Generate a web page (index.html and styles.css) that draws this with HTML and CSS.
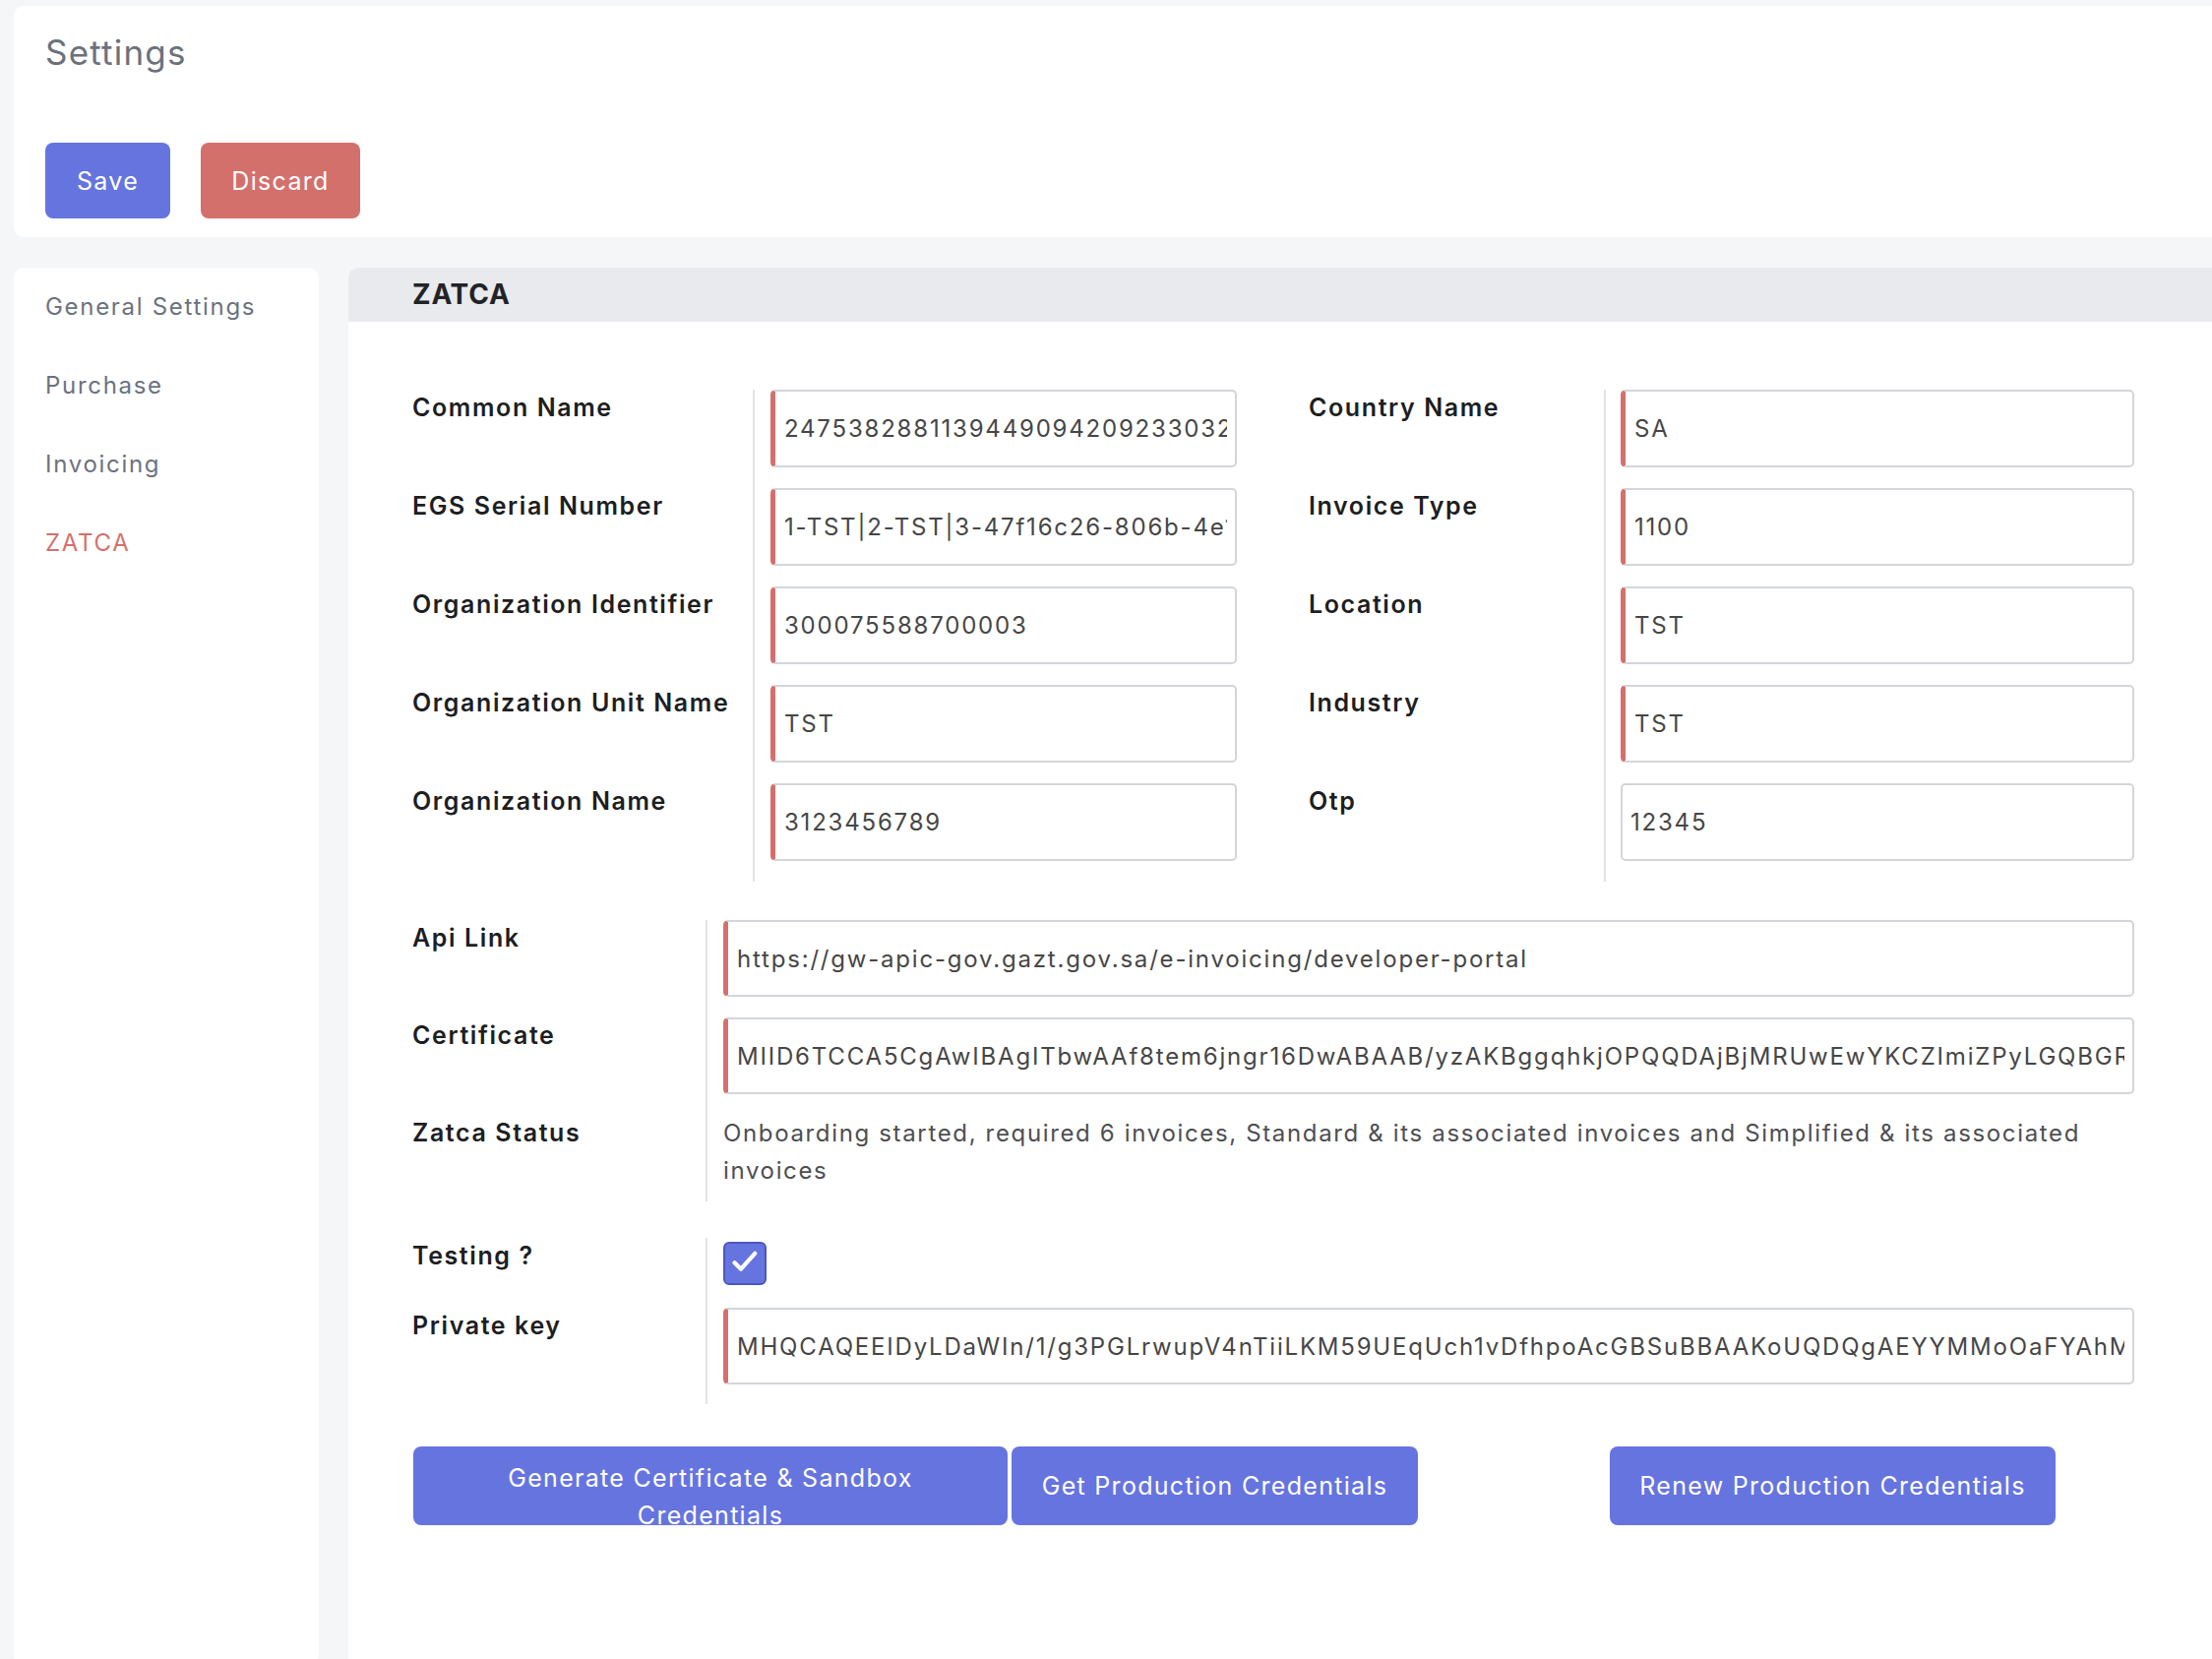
FILE: index.html
```html
<!DOCTYPE html>
<html lang="en">
<head>
<meta charset="utf-8">
<title>Settings</title>
<link rel="stylesheet" href="styles.css">
</head>
<body>
<div class="page">
  <header class="topbar">
    <h1 class="title">Settings</h1>
    <div class="actions">
      <button class="btn btn-primary btn-save">Save</button>
      <button class="btn btn-danger btn-discard">Discard</button>
    </div>
  </header>

  <div class="layout">
    <nav class="sidebar">
      <a class="nav-item">General Settings</a>
      <a class="nav-item">Purchase</a>
      <a class="nav-item">Invoicing</a>
      <a class="nav-item active">ZATCA</a>
    </nav>

    <main class="panel">
      <div class="panel-header">ZATCA</div>
      <div class="panel-body">
        <div class="grid-top">
          <div class="col col-left">
            <div class="field">
              <label class="label">Common Name</label>
              <div class="control"><input class="input req" value="24753828811394490942092330328446150"></div>
            </div>
            <div class="field">
              <label class="label">EGS Serial Number</label>
              <div class="control"><input class="input req" value="1-TST|2-TST|3-47f16c26-806b-4e15-b269-7a803884be9c"></div>
            </div>
            <div class="field">
              <label class="label">Organization Identifier</label>
              <div class="control"><input class="input req" value="300075588700003"></div>
            </div>
            <div class="field">
              <label class="label">Organization Unit Name</label>
              <div class="control"><input class="input req" value="TST"></div>
            </div>
            <div class="field">
              <label class="label">Organization Name</label>
              <div class="control"><input class="input req" value="3123456789"></div>
            </div>
          </div>

          <div class="col col-right">
            <div class="field">
              <label class="label">Country Name</label>
              <div class="control"><input class="input req" value="SA"></div>
            </div>
            <div class="field">
              <label class="label">Invoice Type</label>
              <div class="control"><input class="input req" value="1100"></div>
            </div>
            <div class="field">
              <label class="label">Location</label>
              <div class="control"><input class="input req" value="TST"></div>
            </div>
            <div class="field">
              <label class="label">Industry</label>
              <div class="control"><input class="input req" value="TST"></div>
            </div>
            <div class="field">
              <label class="label">Otp</label>
              <div class="control"><input class="input plain" value="12345"></div>
            </div>
          </div>
        </div>

        <div class="group group-api">
          <div class="field wide">
            <label class="label">Api Link</label>
            <div class="control"><input class="input req" value="https://gw-apic-gov.gazt.gov.sa/e-invoicing/developer-portal"></div>
          </div>
          <div class="field wide">
            <label class="label">Certificate</label>
            <div class="control"><input class="input req" value="MIID6TCCA5CgAwIBAgITbwAAf8tem6jngr16DwABAAB/yzAKBggqhkjOPQQDAjBjMRUwEwYKCZImiZPyLGQBGRYFbG9jYWwxEzARBgoJkiaJk/IsZAEZFgNnb3Yx"></div>
          </div>
          <div class="field wide status">
            <label class="label">Zatca Status</label>
            <div class="control"><p class="status-text">Onboarding started, required 6 invoices, Standard &amp; its associated invoices and Simplified &amp; its associated invoices</p></div>
          </div>
        </div>

        <div class="group group-key">
          <div class="field wide testing">
            <label class="label">Testing ?</label>
            <div class="control">
              <span class="checkbox" role="checkbox" aria-checked="true">
                <svg viewBox="0 0 24 24" width="34" height="34"><path d="M4.6 11.4 L9.2 16 L19.2 4.8" fill="none" stroke="#fff" stroke-width="3" stroke-linecap="round" stroke-linejoin="round"/></svg>
              </span>
            </div>
          </div>
          <div class="field wide last">
            <label class="label">Private key</label>
            <div class="control"><input class="input req" value="MHQCAQEEIDyLDaWIn/1/g3PGLrwupV4nTiiLKM59UEqUch1vDfhpoAcGBSuBBAAKoUQDQgAEYYMMoOaFYAhMO/steotfZyavr6p11SSlwsK9azmsLY7b1b+FLhqMArhB2dqHKboxqKNfvkKDePhpqjui5hcn0Q=="></div>
          </div>
        </div>

        <div class="bottom-actions">
          <button class="btn btn-primary btn-generate"><span>Generate Certificate &amp; Sandbox Credentials</span></button>
          <button class="btn btn-primary btn-get">Get Production Credentials</button>
          <button class="btn btn-primary btn-renew">Renew Production Credentials</button>
        </div>
      </div>
    </main>
  </div>
</div>
</body>
</html>
```

FILE: styles.css
```css
* { box-sizing: border-box; }

html, body {
  margin: 0;
  padding: 0;
}

body {
  background: #f5f6f8;
  font-family: Inter, "Open Sans", "Liberation Sans", sans-serif;
  color: #1f2024;
  overflow: hidden;
}

.page {
  padding: 6px 0 0 14px;
}

/* ---------- top bar ---------- */
.topbar {
  background: #ffffff;
  border-radius: 10px 0 0 10px;
  padding: 26px 0 19px 32px;
}

.title {
  margin: 0;
  font-size: 35px;
  line-height: 43px;
  font-weight: 400;
  letter-spacing: 1.2px;
  color: #6b717c;
}

.actions {
  display: flex;
  gap: 31px;
  margin-top: 70px;
}

.btn {
  border: none;
  border-radius: 8px;
  color: #ffffff;
  font-family: inherit;
  font-size: 25px;
  line-height: 38px;
  letter-spacing: 1.3px;
  cursor: pointer;
}

.btn-primary { background: #6674e0; }
.btn-danger { background: #d4706c; }

.btn-save { width: 127px; height: 77px; }
.btn-discard { width: 162px; height: 77px; }

/* ---------- layout ---------- */
.layout {
  display: flex;
  gap: 30px;
  margin-top: 31px;
}

.sidebar {
  width: 310px;
  flex: none;
  min-height: 1420px;
  background: #ffffff;
  border-radius: 10px;
  padding-left: 32px;
}

.nav-item {
  display: block;
  padding: 25px 0;
  line-height: 30px;
  font-size: 24px;
  letter-spacing: 1.7px;
  color: #6b7280;
  text-decoration: none;
}

.nav-item.active { color: #d4706c; }

.panel {
  flex: 1;
  min-height: 1420px;
  background: #ffffff;
  border-radius: 10px 0 0 0;
  overflow: hidden;
}

.panel-header {
  height: 55px;
  line-height: 55px;
  background: #e9eaee;
  padding-left: 65px;
  font-size: 28px;
  font-weight: 700;
  letter-spacing: 0.8px;
  color: #222327;
}

.panel-body {
  padding: 69px 79px 0 65px;
}

/* ---------- fields ---------- */
.grid-top {
  display: grid;
  grid-template-columns: 838px 839px;
  column-gap: 73px;
}

.field {
  display: flex;
}

.label {
  flex: none;
  font-size: 25px;
  line-height: 36px;
  font-weight: 600;
  letter-spacing: 1.6px;
  color: #1d1e22;
}

.col-left .label { width: 346px; }
.col-right .label { width: 300px; }

.control {
  flex: 1;
  min-width: 0;
  border-left: 2px solid #e2e3e6;
  padding: 0 0 21px 16px;
}

.col-right .control { padding-left: 15px; }

.input {
  display: block;
  width: 100%;
  height: 79px;
  border: 2px solid #d3d5da;
  border-radius: 5px;
  padding: 0 8px 0 9px;
  font-family: inherit;
  font-size: 24px;
  letter-spacing: 1.8px;
  color: #464646;
  background: #ffffff;
  outline: none;
}

.input.req { border-left: 5px solid #d4706c; }
.input.plain { padding-left: 8px; }

.wide .label { width: 298px; }
.wide .input { height: 78px; }

.group-api { margin-top: 39px; }
.group-key { margin-top: 37px; }

.status .control { padding-bottom: 12px; }

.status-text {
  margin: 0;
  font-size: 24px;
  line-height: 38px;
  letter-spacing: 1.65px;
  color: #4d4e52;
}

.testing .control { padding-bottom: 23px; }

.checkbox {
  display: flex;
  align-items: center;
  justify-content: center;
  width: 44px;
  height: 44px;
  margin-top: 4px;
  background: #6674e0;
  border: 2px solid #4b57c2;
  border-radius: 6px;
}

.last .control { padding-bottom: 20px; }

/* ---------- bottom buttons ---------- */
.bottom-actions {
  display: flex;
  align-items: flex-start;
  margin-top: 43px;
  padding-left: 1px;
}

.bottom-actions .btn {
  height: 80px;
  padding: 0 32px;
  text-align: center;
}

.btn-generate {
  width: 604px;
  display: flex;
  align-items: flex-start;
  justify-content: center;
  padding-top: 13px !important;
  overflow: visible;
}

.btn-get,
.btn-renew {
  white-space: nowrap;
  padding: 0 !important;
}

.btn-get { width: 413px; margin-left: 4px; }
.btn-renew { width: 453px; margin-left: 195px; }
```
